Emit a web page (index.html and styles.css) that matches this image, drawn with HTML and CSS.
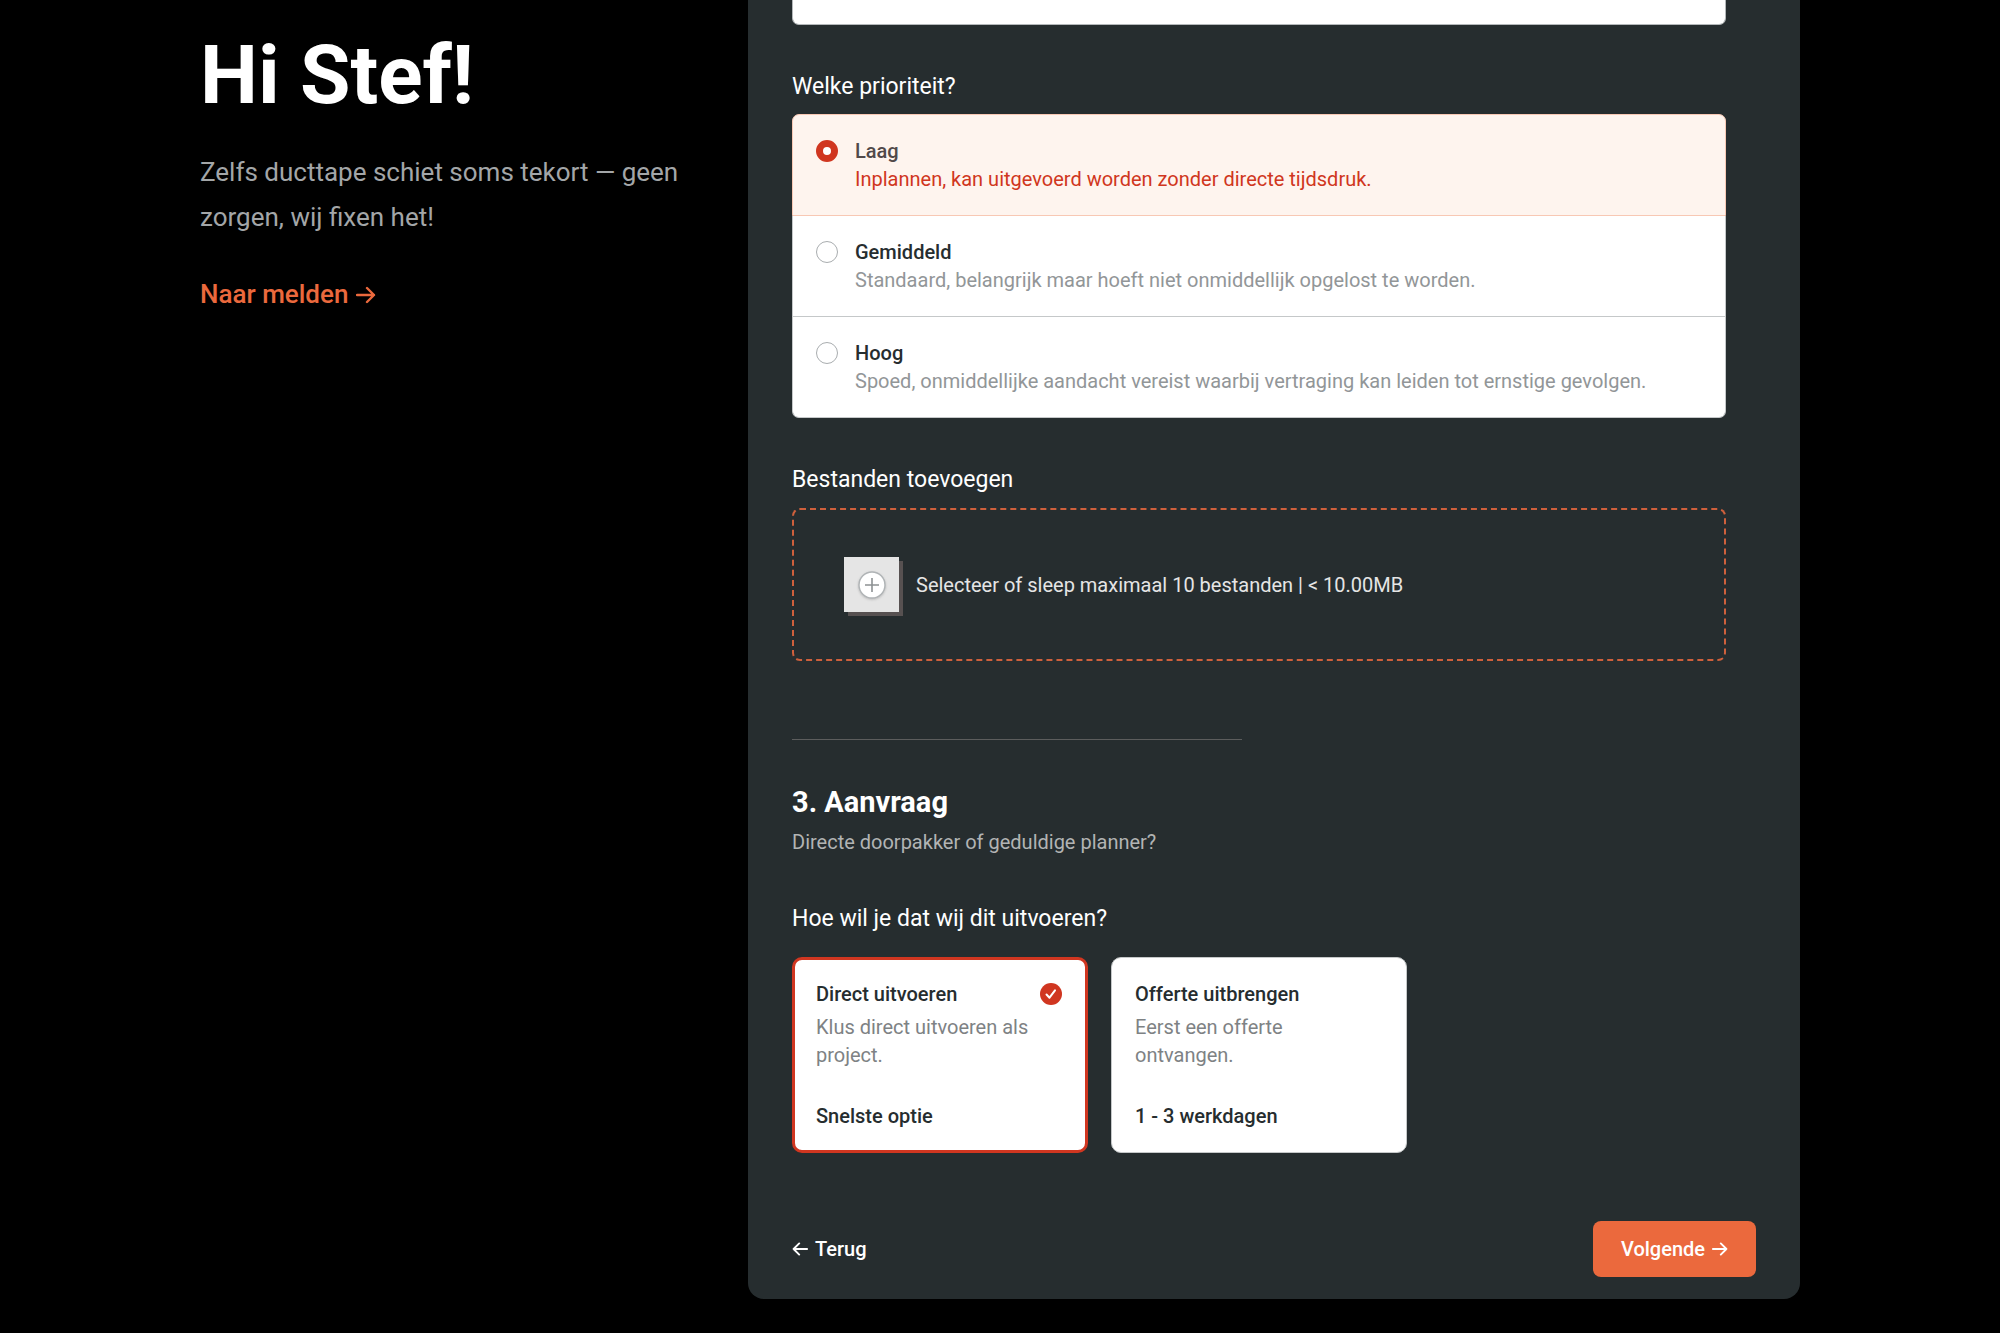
FILE: index.html
```html
<!DOCTYPE html>
<html lang="nl">
<head>
    <meta charset="UTF-8">
    <meta name="viewport" content="width=device-width, initial-scale=1.0">
    <title>Melding maken</title>
    <link rel="stylesheet" href="styles.css">
</head>
<body>
    <div class="page">
        <aside class="intro">
            <h1>Hi Stef!</h1>
            <p>Zelfs ducttape schiet soms tekort — geen zorgen, wij fixen het!</p>
            <a class="intro-link" href="#melden">
                Naar melden
                <svg class="arrow" viewBox="0 0 20 20" aria-hidden="true"><path d="M1 10h17M11 3l7 7-7 7"/></svg>
            </a>
        </aside>

        <form class="panel" id="melden">
            <div class="fields">
                <textarea class="description" name="description" aria-label="Omschrijving"></textarea>

                <fieldset>
                    <legend>Welke prioriteit?</legend>
                    <div class="priorities">
                        <label class="priority">
                            <input type="radio" name="priority" value="laag" checked>
                            <span>
                                <span class="priority-name">Laag</span>
                                <span class="priority-text">Inplannen, kan uitgevoerd worden zonder directe tijdsdruk.</span>
                            </span>
                        </label>
                        <label class="priority">
                            <input type="radio" name="priority" value="gemiddeld">
                            <span>
                                <span class="priority-name">Gemiddeld</span>
                                <span class="priority-text">Standaard, belangrijk maar hoeft niet onmiddellijk opgelost te worden.</span>
                            </span>
                        </label>
                        <label class="priority">
                            <input type="radio" name="priority" value="hoog">
                            <span>
                                <span class="priority-name">Hoog</span>
                                <span class="priority-text">Spoed, onmiddellijke aandacht vereist waarbij vertraging kan leiden tot ernstige gevolgen.</span>
                            </span>
                        </label>
                    </div>
                </fieldset>

                <div class="files">
                    <label class="field-label" for="files">Bestanden toevoegen</label>
                    <label class="dropzone" for="files">
                        <input class="visually-hidden" type="file" id="files" name="files" multiple>
                        <span class="dropzone-icon">
                            <svg viewBox="0 0 28 28" aria-hidden="true">
                                <circle cx="14" cy="14" r="13"/>
                                <path d="M14 7v14M7 14h14"/>
                            </svg>
                        </span>
                        <span>Selecteer of sleep maximaal 10 bestanden | &lt; 10.00MB</span>
                    </label>
                </div>

                <hr>

                <h2>3. Aanvraag</h2>
                <p class="subtitle">Directe doorpakker of geduldige planner?</p>

                <fieldset>
                    <legend>Hoe wil je dat wij dit uitvoeren?</legend>
                    <div class="options">
                        <label class="option">
                            <input class="visually-hidden" type="radio" name="execution" value="direct" checked>
                            <span class="option-name">Direct uitvoeren</span>
                            <span class="option-text">Klus direct uitvoeren als project.</span>
                            <span class="option-time">Snelste optie</span>
                            <svg class="option-check" viewBox="0 0 22 22" aria-hidden="true">
                                <circle cx="11" cy="11" r="11"/>
                                <path d="M6.5 11.5l3 3.2 5.5-7.4"/>
                            </svg>
                        </label>
                        <label class="option">
                            <input class="visually-hidden" type="radio" name="execution" value="offerte">
                            <span class="option-name">Offerte uitbrengen</span>
                            <span class="option-text">Eerst een offerte ontvangen.</span>
                            <span class="option-time">1 - 3 werkdagen</span>
                            <svg class="option-check" viewBox="0 0 22 22" aria-hidden="true">
                                <circle cx="11" cy="11" r="11"/>
                                <path d="M6.5 11.5l3 3.2 5.5-7.4"/>
                            </svg>
                        </label>
                    </div>
                </fieldset>
            </div>

            <div class="actions">
                <button class="button back" type="button">
                    <svg class="arrow" viewBox="0 0 20 20" aria-hidden="true"><path d="M19 10H2M9 3l-7 7 7 7"/></svg>
                    Terug
                </button>
                <button class="button next" type="submit">
                    Volgende
                    <svg class="arrow" viewBox="0 0 20 20" aria-hidden="true"><path d="M1 10h17M11 3l7 7-7 7"/></svg>
                </button>
            </div>
        </form>
    </div>
</body>
</html>
```

FILE: styles.css
```css
* {
    box-sizing: border-box;
}
body {
    margin: 0;
    background-color: #000;
    color: #fff;
    font-family: Roboto, "Liberation Sans", sans-serif;
    font-size: 20px;
    line-height: 28px;
}
.page {
    display: grid;
    grid-template-columns: 1fr 65.75%;
    padding: 0 10% 33px;
}

/* left column */
.intro {
    padding: 27px 64px 0 0;
}
h1 {
    margin: 0 0 27px;
    font-size: 82px;
    line-height: 96px;
    font-weight: 700;
}
.intro p {
    margin: 0 0 32px;
    color: #a3a6a8;
    font-size: 26px;
    line-height: 45px;
}
.intro-link {
    display: inline-flex;
    align-items: center;
    gap: 8px;
    color: #eb693d;
    font-size: 26px;
    line-height: 45px;
    font-weight: 500;
    text-decoration: none;
}
.arrow {
    width: 16px;
    height: 16px;
    fill: none;
    stroke: currentColor;
    stroke-width: 2.4;
    stroke-linecap: round;
    stroke-linejoin: round;
}
.intro-link .arrow {
    width: 20px;
    height: 20px;
}

/* form */
.panel {
    padding: 0 44px 22px;
    background-color: #262d2f;
    border-radius: 0 0 16px 16px;
}
.fields {
    padding-right: 30px;
}
fieldset {
    margin: 0;
    padding: 0;
    border: 0;
    min-width: 0;
}
legend,
.field-label {
    display: block;
    padding: 0;
    font-size: 23px;
    line-height: 32px;
}
.description {
    display: block;
    width: 100%;
    height: 25px;
    margin-bottom: 46px;
    background-color: #fff;
    border: 1px solid #b4b8ba;
    border-top: 0;
    border-radius: 0 0 7px 7px;
    resize: none;
}
.priorities {
    margin-top: 11px;
}
.priority {
    display: flex;
    gap: 17px;
    padding: 22px 23px;
    background-color: #fff;
    border: 1px solid #c5c8c9;
    color: #262d2f;
}
.priority + .priority {
    border-top: 0;
}
.priority:first-child {
    border-radius: 7px 7px 0 0;
}
.priority:last-child {
    border-radius: 0 0 7px 7px;
}
.priority:has(:checked) {
    background-color: #fef4ee;
    border-color: #f8c8b4;
}
.priority input {
    appearance: none;
    flex: none;
    width: 22px;
    height: 22px;
    margin: 3px 0 0;
    background-color: #fff;
    border: 1px solid #a9adaf;
    border-radius: 50%;
}
.priority input:checked {
    border: 7px solid #d03620;
}
.priority-name,
.priority-text {
    display: block;
}
.priority-name {
    font-weight: 500;
}
.priority-text {
    color: #929698;
}
.priority :checked + span .priority-name {
    color: #51494a;
}
.priority :checked + span .priority-text {
    color: #d03620;
}
.files {
    margin-top: 46px;
}
.dropzone {
    display: flex;
    align-items: center;
    gap: 17px;
    position: relative;
    margin-top: 12px;
    padding: 47px 50px;
    border: 2px dashed #cf603c;
    border-radius: 8px;
    color: #e5e5e5;
}
.dropzone-icon {
    display: flex;
    align-items: center;
    justify-content: center;
    width: 55px;
    height: 55px;
    background-color: #e5e5e5;
    box-shadow: 4px 4px 0 #575151;
}
.dropzone-icon svg {
    width: 28px;
    height: 28px;
    fill: #fff;
    stroke: #b0b4b6;
    stroke-width: 1.4;
    filter: drop-shadow(0 1px 1px #bbb);
}
.dropzone-icon path {
    stroke: #8d9193;
    stroke-width: 1.6;
}
hr {
    max-width: 450px;
    height: 1px;
    margin: 78px 0 44px;
    background-color: #5c5d5d;
    border: 0;
}
h2 {
    margin: 0 0 8px;
    font-size: 29px;
    line-height: 36px;
    font-weight: 700;
}
.subtitle {
    margin: 0 0 47px;
    color: #b2b4b4;
}
.options {
    display: grid;
    grid-template-columns: repeat(3, 1fr);
    gap: 23px;
    margin-top: 22px;
}
.option {
    display: flex;
    flex-direction: column;
    position: relative;
    padding: 22px 56px 22px 23px;
    background-color: #fff;
    border: 1px solid #c5c8c9;
    border-radius: 10px;
    color: #262d2f;
}
.option:has(:checked) {
    border: 3px solid #d03620;
    padding: 20px 54px 20px 21px;
}
.option-name,
.option-time {
    font-weight: 500;
}
.option-text {
    margin: 5px 0 33px;
    color: #7e8284;
}
.option-check {
    display: none;
    position: absolute;
    top: 23px;
    right: 23px;
    width: 22px;
    height: 22px;
    fill: #d03620;
}
.option-check path {
    fill: none;
    stroke: #fff;
    stroke-width: 2;
    stroke-linecap: round;
    stroke-linejoin: round;
}
.option :checked ~ .option-check {
    display: block;
}
.actions {
    display: flex;
    justify-content: space-between;
    margin-top: 68px;
}
.button {
    display: flex;
    align-items: center;
    gap: 7px;
    padding: 14px 28px;
    background: none;
    border: 0;
    border-radius: 8px;
    color: #fff;
    font: inherit;
    font-weight: 500;
    cursor: pointer;
}
.back {
    padding: 14px 0;
}
.next {
    background-color: #eb693d;
}
.visually-hidden {
    position: absolute;
    width: 1px;
    height: 1px;
    margin: 0;
    opacity: 0;
}
```
